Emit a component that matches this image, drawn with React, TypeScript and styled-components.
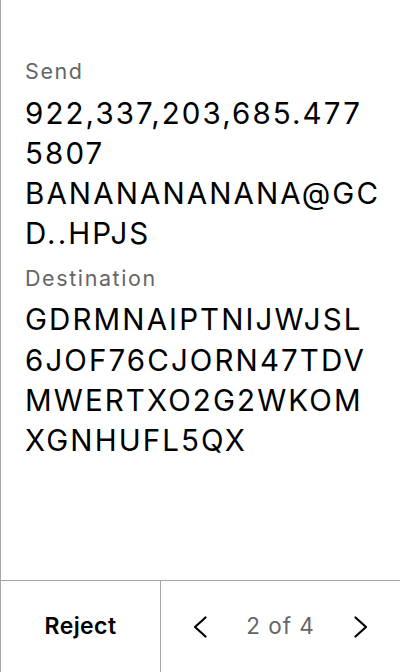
import React from "react";
import styled, { createGlobalStyle } from "styled-components";

const Global = createGlobalStyle`
  html, body { margin: 0; padding: 0; background: #fff; }
  body { font-family: Inter, "Noto Sans", sans-serif; }
`;

const Screen = styled.div`
  width: 400px;
  height: 672px;
  box-sizing: border-box;
  border-left: 1px solid #a6a6a6;
  display: flex;
  flex-direction: column;
  background: #fff;
`;

const Body = styled.div`
  flex: 1;
  padding: 56px 24px 0 24px;
  display: flex;
  flex-direction: column;
`;

const Label = styled.div`
  font-size: 21.5px;
  line-height: 30px;
  letter-spacing: 1.6px;
  color: #666;
  margin-bottom: 6.5px;
`;

const Value = styled.div`
  font-size: 29.5px;
  line-height: 40.2px;
  letter-spacing: 2.1px;
  color: #000;
  margin-bottom: 9.5px;
`;

const ValueLine = styled.div`
  white-space: nowrap;
`;

const Footer = styled.div`
  height: 92px;
  box-sizing: border-box;
  border-top: 1px solid #a6a6a6;
  display: grid;
  grid-template-columns: 160px 1fr;
`;

const RejectButton = styled.button`
  all: unset;
  display: flex;
  align-items: center;
  justify-content: center;
  padding-bottom: 2px;
  font-family: Inter, sans-serif;
  font-weight: 600;
  font-size: 23px;
  letter-spacing: 0.4px;
  color: #000;
  border-right: 1px solid #a6a6a6;
`;

const Pager = styled.div`
  display: flex;
  align-items: center;
  justify-content: space-between;
  padding: 0 32px 0 32px;
`;

const Arrow = styled.button`
  all: unset;
  display: flex;
  align-items: center;
  justify-content: center;
  width: 14px;
  height: 32px;
`;

const PageText = styled.span`
  font-size: 22.5px;
  letter-spacing: 1px;
  color: #666;
  padding-bottom: 2px;
`;

const Chevron = ({ dir }: { dir: "left" | "right" }) => (
  <svg width="14" height="22" viewBox="0 0 14 22" fill="none">
    <path
      d={dir === "left" ? "M12.5 1.5 L2 11 L12.5 20.5" : "M1.5 1.5 L12 11 L1.5 20.5"}
      stroke="#000"
      strokeWidth="2.2"
      strokeLinecap="round"
      strokeLinejoin="round"
    />
  </svg>
);

const fields: { label: string; lines: string[] }[] = [
  {
    label: "Send",
    lines: ["922,337,203,685.477", "5807", "BANANANANANA@GC", "D..HPJS"],
  },
  {
    label: "Destination",
    lines: ["GDRMNAIPTNIJWJSL", "6JOF76CJORN47TDV", "MWERTXO2G2WKOM", "XGNHUFL5QX"],
  },
];

export default function App() {
  return (
    <>
      <Global />
      <Screen>
        <Body>
          {fields.map((f) => (
            <React.Fragment key={f.label}>
              <Label>{f.label}</Label>
              <Value>
                {f.lines.map((l, i) => (
                  <ValueLine key={i}>{l}</ValueLine>
                ))}
              </Value>
            </React.Fragment>
          ))}
        </Body>
        <Footer>
          <RejectButton>Reject</RejectButton>
          <Pager>
            <Arrow><Chevron dir="left" /></Arrow>
            <PageText>2 of 4</PageText>
            <Arrow><Chevron dir="right" /></Arrow>
          </Pager>
        </Footer>
      </Screen>
    </>
  );
}
